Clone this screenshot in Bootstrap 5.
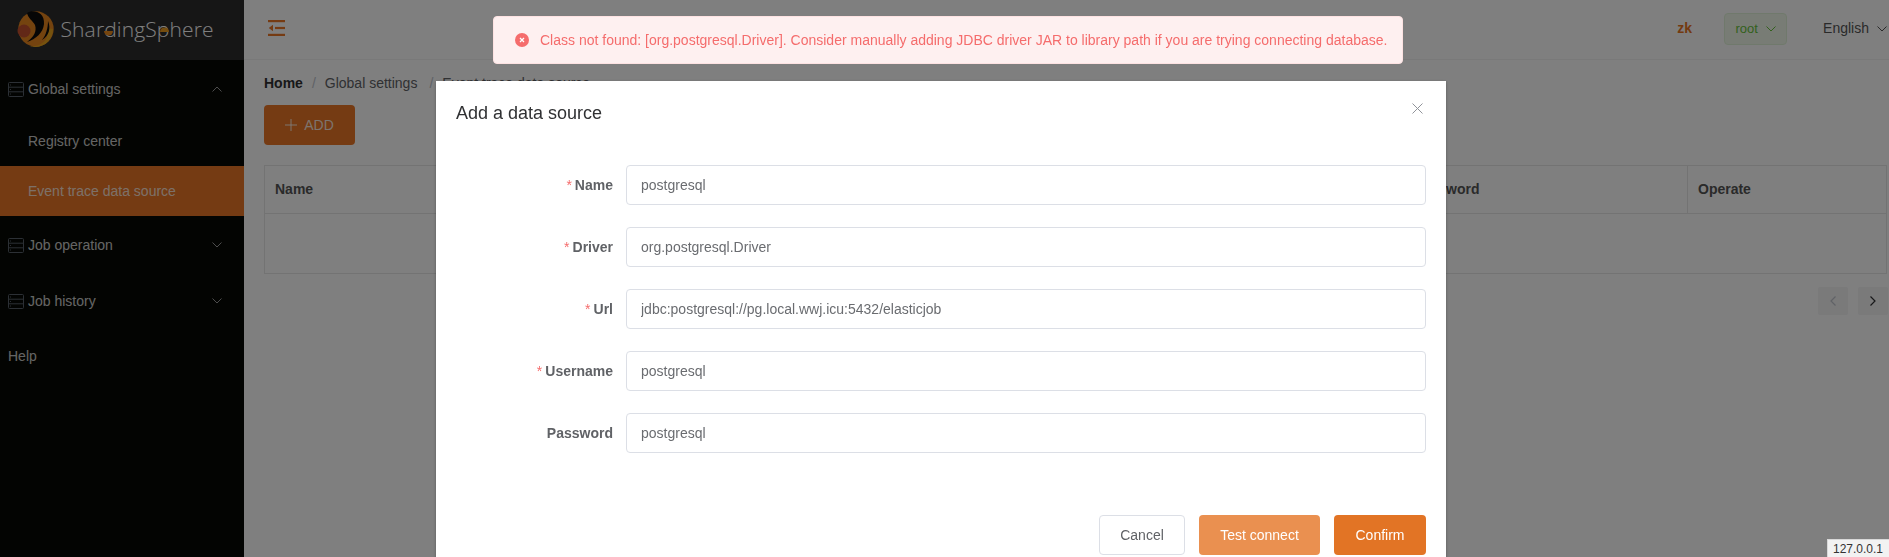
<!DOCTYPE html>
<html lang="en">
<head>
    <meta charset="utf-8" />
    <meta name="viewport" content="width=device-width, initial-scale=1">
    <title>ElasticJob</title>
    <link href="https://cdn.jsdelivr.net/npm/bootstrap@5.3.0/dist/css/bootstrap.min.css" rel="stylesheet">
    <style>
        html, body { height: 100%; overflow: hidden; }
        body { font-family: "Liberation Sans", Arial, sans-serif; font-size: 14px; color: #606266; background: #fff; }
        .app-shell { height: 557px; }
        .side-bar { width: 244px; background: #070904; color: rgba(255, 255, 255, .8); }
        .logo-box { height: 60px; background: #2d2d2d; }
        .logo-box svg { display: block; }
        .side-menu { padding-top: 4px; }
        .menu-row { height: 50px; padding-left: 8px; padding-right: 22px; }
        .menu-row.sub-row { padding-left: 28px; }
        .menu-row.active-row { background: #ea7626; }
        .gap-a { margin-top: 2px; }
        .gap-b { margin-top: 4px; }
        .gap-c { margin-top: 6px; }
        .gap-d { margin-top: 5px; }
        .menu-icon { width: 16px; height: 15px; margin-right: 4px; }
        .top-bar { height: 60px; border-bottom: 1px solid #f2f2f2; padding: 0 2px 0 24px; }
        .toggle-mark { margin-bottom: 4px; }
        .top-right { margin-bottom: 2px; }
        .zk-label { color: #e8751f; font-weight: 700; margin-right: 32px; }
        .root-tag { width: 63px; height: 32px; background: #f0f9eb; border: 1px solid #e1f3d8; border-radius: 4px; color: #67c23a; font-size: 13px; margin-right: 36px; }
        .lang-pick { color: #555; }
        .main-area { padding: 13px 2px 0 20px; min-width: 0; }
        .crumbs { --bs-breadcrumb-divider: "/"; --bs-breadcrumb-item-padding-x: 9px; --bs-breadcrumb-margin-bottom: 0; height: 20px; line-height: 20px; }
        .crumbs .breadcrumb-item { color: #606266; }
        .crumbs .breadcrumb-item:last-child { margin-left: 3px; }
        .crumbs .breadcrumb-item + .breadcrumb-item::before { color: #c0c4cc; }
        .crumbs .first-crumb { font-weight: 700; color: #303133; }
        .add-btn { width: 91px; height: 40px; margin-top: 12px; background: #ea7626; border: 0; border-radius: 4px; color: rgba(255, 255, 255, .85); font-size: 14px; gap: 7px; }
        .job-table { margin-top: 20px; table-layout: fixed; width: 100%; border-color: #e6e6e6; margin-bottom: 0; }
        .job-table th { height: 48px; padding: 0 10px; font-weight: 700; color: #555; vertical-align: middle; }
        .job-table .operate-col { width: 199px; }
        .job-table td { height: 60px; }
        .pager-box { margin-top: 13px; margin-right: -1px; }
        .page-btn { width: 30px; height: 28px; background: #f4f4f5; border-radius: 2px; }
        .page-btn + .page-btn { margin-left: 10px; }
        .dim-layer { position: fixed; inset: 0; background: rgba(0, 0, 0, .5); z-index: 10; }
        .dialog-box { position: fixed; left: 436px; top: 81px; width: 1010px; background: #fff; z-index: 20; box-shadow: 0 1px 3px rgba(0, 0, 0, .3); padding: 0 20px 20px; }
        .dialog-head { height: 60px; padding-top: 20px; font-size: 18px; line-height: 24px; color: #303133; }
        .close-mark { position: absolute; right: 23px; top: 22px; }
        .form-line { height: 40px; margin-bottom: 22px; }
        .form-line label { width: 170px; padding-right: 13px; text-align: right; font-weight: 700; color: #606266; }
        .req-star { color: #f56c6c; font-weight: 400; margin-right: 3px; }
        .form-line .form-control { flex: 1; height: 40px; font-size: 14px; color: #6a6c70; border-color: #dcdfe6; border-radius: 4px; padding: 0 14px; }
        .dialog-foot { margin-top: 62px; height: 40px; }
        .foot-btn { height: 40px; font-size: 14px; border-radius: 4px; line-height: 1; padding: 0; }
        .cancel-btn { border: 1px solid #dcdfe6; color: #606266; background: #fff; width: 86px; }
        .test-btn { background: #ea9050; border: 0; color: #fff; width: 121px; margin-left: 14px; }
        .ok-btn { background: #e27425; border: 0; color: #fff; width: 92px; margin-left: 14px; }
        .notice-box { position: fixed; left: 493px; top: 16px; width: 910px; height: 48px; background: #fef0f0; border: 1px solid #fde2e2; border-radius: 4px; color: #f56c6c; padding-left: 21px; z-index: 30; white-space: nowrap; }
        .notice-box svg { margin-right: 11px; flex: none; }
        .host-tip { position: fixed; right: 0; bottom: 0; width: 62px; height: 18px; background: #f2f2f2; border: 1px solid #d8d8d8; border-right: 0; border-bottom: 0; color: #333; font-size: 12px; line-height: 18px; padding-left: 5px; z-index: 40; }
    </style>
</head>
<body>
    <div class="app-shell d-flex">
        <aside class="side-bar flex-shrink-0">
            <div class="logo-box">
                <svg width="244" height="60" viewBox="0 0 244 60">
                    <circle cx="36" cy="29" r="17.7" fill="#e8861f"/>
                    <path d="M30 46c8 1 15-3 17-9 1-3 1-6 0-9l6 1c0 10-8 18-17.500 18-2 0-4-.4-5.500-1z" fill="#eba51c"/>
                    <circle cx="24" cy="31" r="6.500" fill="#c4502e"/>
                    <path d="M27 13c6-4 18-1 17 11-1 9-8 15-17 18 7-5 10-11 8-17-2-4-7-7-8-12z" fill="#0c0c0c"/>
                    <path d="M48 21c3 7 1 15-6 19 4-5 6-12 6-19z" fill="#0c0c0c"/>
                    <text x="60.500" y="37" font-family="'Open Sans', sans-serif" font-weight="300" font-size="21" textLength="153" fill="#fff">ShardingSphere</text>
                    <path d="M104 31h9a4.500 4.500 0 0 1-9 0z" fill="#ea8a1e"/>
                    <path d="M160 32a4.500 4.500 0 0 1 9 0z" fill="#ea9a1e"/>
                </svg>
            </div>
            <nav class="side-menu">
                <div class="menu-row d-flex align-items-center">
                    <svg class="menu-icon" viewBox="0 0 16 15" fill="none" stroke="#58606a"><rect x=".5" y=".5" width="15" height="14" rx="1"/><path d="M.5 5.200h15M.5 9.800h15M2 3h1M2 7.500h1M2 12h1"/></svg>
                    <span class="flex-grow-1">Global settings</span>
                    <svg width="10" height="6" viewBox="0 0 10 6" fill="none" stroke="#9a9a9a"><path d="M.5 5.500 5 1l4.500 4.500"/></svg>
                </div>
                <div class="menu-row sub-row gap-a d-flex align-items-center">Registry center</div>
                <div class="menu-row sub-row active-row d-flex align-items-center">Event trace data source</div>
                <div class="menu-row gap-b d-flex align-items-center">
                    <svg class="menu-icon" viewBox="0 0 16 15" fill="none" stroke="#58606a"><rect x=".5" y=".5" width="15" height="14" rx="1"/><path d="M.5 5.200h15M.5 9.800h15M2 3h1M2 7.500h1M2 12h1"/></svg>
                    <span class="flex-grow-1">Job operation</span>
                    <svg width="10" height="6" viewBox="0 0 10 6" fill="none" stroke="#9a9a9a"><path d="M.5.500 5 5 9.500.5"/></svg>
                </div>
                <div class="menu-row gap-c d-flex align-items-center">
                    <svg class="menu-icon" viewBox="0 0 16 15" fill="none" stroke="#58606a"><rect x=".5" y=".5" width="15" height="14" rx="1"/><path d="M.5 5.200h15M.5 9.800h15M2 3h1M2 7.500h1M2 12h1"/></svg>
                    <span class="flex-grow-1">Job history</span>
                    <svg width="10" height="6" viewBox="0 0 10 6" fill="none" stroke="#9a9a9a"><path d="M.5.500 5 5 9.500.5"/></svg>
                </div>
                <div class="menu-row gap-d d-flex align-items-center">Help</div>
            </nav>
        </aside>
        <div class="flex-grow-1" style="min-width:0">
            <header class="top-bar d-flex align-items-center">
                <svg class="toggle-mark" width="17" height="16" viewBox="0 0 17 16" fill="#ea7626"><rect width="17" height="2.200" y="0"/><rect width="17" height="2.200" y="13.800"/><rect x="7" width="10" height="2.200" y="6.900"/><path d="M5 4.700v6.600L.8 8z"/></svg>
                <div class="top-right ms-auto d-flex align-items-center">
                    <span class="zk-label">zk</span>
                    <div class="root-tag d-flex align-items-center justify-content-center gap-2">
                        <span>root</span>
                        <svg width="10" height="6" viewBox="0 0 10 6" fill="none" stroke="#67c23a"><path d="M.5.500 5 5 9.500.5"/></svg>
                    </div>
                    <div class="lang-pick d-flex align-items-center gap-2">
                        <span>English</span>
                        <svg width="10" height="6" viewBox="0 0 10 6" fill="none" stroke="#555"><path d="M.5.500 5 5 9.500.5"/></svg>
                    </div>
                </div>
            </header>
            <main class="main-area">
                <ol class="breadcrumb crumbs">
                    <li class="breadcrumb-item first-crumb">Home</li>
                    <li class="breadcrumb-item">Global settings</li>
                    <li class="breadcrumb-item">Event trace data source</li>
                </ol>
                <button class="btn add-btn d-flex align-items-center justify-content-center" type="button">
                    <svg width="12" height="12" viewBox="0 0 12 12" stroke="#fff" stroke-opacity=".85" fill="none"><path d="M6 0v12M0 6h12"/></svg>
                    ADD
                </button>
                <table class="table table-bordered job-table">
                    <thead>
                        <tr>
                            <th>Name</th>
                            <th>Driver</th>
                            <th>Url</th>
                            <th>Username</th>
                            <th>Password</th>
                            <th class="operate-col">Operate</th>
                        </tr>
                    </thead>
                    <tbody>
                        <tr><td colspan="6"></td></tr>
                    </tbody>
                </table>
                <div class="pager-box d-flex justify-content-end">
                    <div class="page-btn d-flex align-items-center justify-content-center">
                        <svg width="6" height="10" viewBox="0 0 6 10" fill="none" stroke="#c0c4cc" stroke-width="1.200"><path d="M5.500.5 1 5l4.500 4.500"/></svg>
                    </div>
                    <div class="page-btn d-flex align-items-center justify-content-center">
                        <svg width="6" height="10" viewBox="0 0 6 10" fill="none" stroke="#303133" stroke-width="1.200"><path d="M.5.500 5 5 .5 9.500"/></svg>
                    </div>
                </div>
            </main>
        </div>
    </div>

    <div class="dim-layer"></div>

    <div class="notice-box d-flex align-items-center">
        <svg width="14" height="14" viewBox="0 0 14 14"><circle cx="7" cy="7" r="7" fill="#f56c6c"/><path d="M5 5l4 4M9 5l-4 4" stroke="#fff" stroke-width="1.300"/></svg>
        <span>Class not found: [org.postgresql.Driver]. Consider manually adding JDBC driver JAR to library path if you are trying connecting database.</span>
    </div>

    <div class="dialog-box">
        <div class="dialog-head">Add a data source</div>
        <svg class="close-mark" width="11" height="11" viewBox="0 0 11 11" fill="none" stroke="#909399"><path d="M.5.500l10 10M10.500.5l-10 10"/></svg>
        <form>
            <div class="form-line mt-4 d-flex align-items-center">
                <label><span class="req-star">*</span>Name</label>
                <input class="form-control" type="text" value="postgresql">
            </div>
            <div class="form-line d-flex align-items-center">
                <label><span class="req-star">*</span>Driver</label>
                <input class="form-control" type="text" value="org.postgresql.Driver">
            </div>
            <div class="form-line d-flex align-items-center">
                <label><span class="req-star">*</span>Url</label>
                <input class="form-control" type="text" value="jdbc:postgresql://pg.local.wwj.icu:5432/elasticjob">
            </div>
            <div class="form-line d-flex align-items-center">
                <label><span class="req-star">*</span>Username</label>
                <input class="form-control" type="text" value="postgresql">
            </div>
            <div class="form-line d-flex align-items-center">
                <label>Password</label>
                <input class="form-control" type="text" value="postgresql">
            </div>
        </form>
        <div class="dialog-foot d-flex justify-content-end">
            <button class="btn foot-btn cancel-btn" type="button">Cancel</button>
            <button class="btn foot-btn test-btn" type="button">Test connect</button>
            <button class="btn foot-btn ok-btn" type="button">Confirm</button>
        </div>
    </div>

    <div class="host-tip">127.0.0.1</div>

    <script src="https://cdn.jsdelivr.net/npm/bootstrap@5.3.0/dist/js/bootstrap.bundle.min.js"></script>
</body>
</html>
